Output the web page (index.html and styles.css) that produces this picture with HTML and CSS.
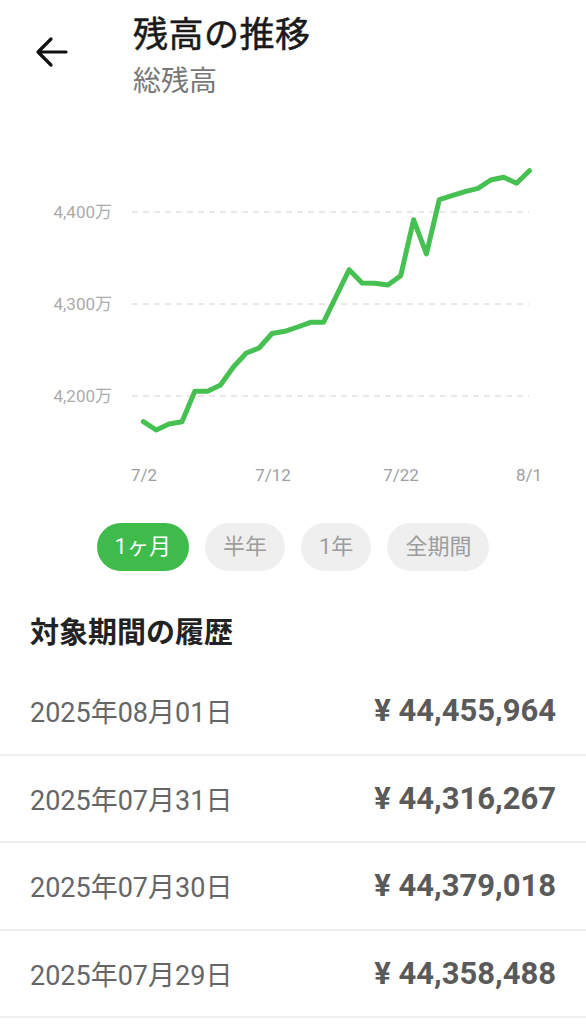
FILE: index.html
```html
<!DOCTYPE html>
<html lang="ja">
<head>
<meta charset="utf-8">
<link rel="stylesheet" href="styles.css">
</head>
<body>
<header class="header">
  <div class="back">
    <svg width="44" height="44" viewBox="0 0 44 44"><path d="M36 22H8M21 9L8 22l13 13" fill="none" stroke="#111" stroke-width="3.2" stroke-linecap="round" stroke-linejoin="round"/></svg>
  </div>
  <div class="titles">
    <div class="title">残高の推移</div>
    <div class="subtitle">総残高</div>
  </div>
</header>

<div class="chart">
  <svg width="586" height="390" viewBox="0 110 586 390">
    <g stroke="#d2d2d2" stroke-width="1" stroke-dasharray="6 5">
      <line x1="132" y1="213" x2="529" y2="213"/>
      <line x1="132" y1="305" x2="529" y2="305"/>
      <line x1="132" y1="397" x2="529" y2="397"/>
    </g>
    <g class="ylab" text-anchor="end">
      <text x="112" y="219">4,400万</text>
      <text x="112" y="311">4,300万</text>
      <text x="112" y="403">4,200万</text>
    </g>
    <g class="xlab" text-anchor="middle">
      <text x="144" y="482">7/2</text>
      <text x="273" y="482">7/12</text>
      <text x="401" y="482">7/22</text>
      <text x="529" y="482">8/1</text>
    </g>
    <polyline fill="none" stroke="#46c050" stroke-width="5" stroke-linejoin="round" stroke-linecap="round"
      points="143.3,422.7 156.2,431 169,425 182,422.7 194.8,392.3 207.7,392.3 220.5,386 233.4,368 246.3,354 259.1,349 272,334.5 284.9,332.3 297.7,328 310.6,323.3 323.5,323.3 336.3,297 349.2,270.7 362,284 375,284.3 387.8,286 400.7,276.7 413.6,220.7 426.4,255 439.3,200.7 452,196.7 465,192.7 478,189.3 490.8,181 503.7,178.3 516.6,184.3 529.4,171.7"/>
  </svg>
</div>

<div class="pills">
  <span class="pill active">1ヶ月</span>
  <span class="pill">半年</span>
  <span class="pill">1年</span>
  <span class="pill">全期間</span>
</div>

<h2 class="section">対象期間の履歴</h2>

<ul class="list">
  <li class="row"><span class="date">2025年08月01日</span><span class="amount">¥ 44,455,964</span></li>
  <li class="row"><span class="date">2025年07月31日</span><span class="amount">¥ 44,316,267</span></li>
  <li class="row"><span class="date">2025年07月30日</span><span class="amount">¥ 44,379,018</span></li>
  <li class="row"><span class="date">2025年07月29日</span><span class="amount">¥ 44,358,488</span></li>
</ul>
</body>
</html>
```

FILE: styles.css
```css
* { box-sizing: border-box; }
html, body { margin: 0; padding: 0; background: #fff; }
body {
  font-family: Roboto, "Noto Sans CJK JP", sans-serif;
  color: #222;
  width: 586px;
  overflow: hidden;
}
.header {
  display: flex;
  padding: 14px 0 0 30px;
}
.back {
  width: 44px;
  height: 44px;
  margin-top: 16px;
  margin-right: 59px;
}
.back svg { display: block; }
.titles { display: flex; flex-direction: column; }
.title {
  font-size: 35px;
  line-height: 44px;
  font-weight: 400;
  color: #1a1a1a;
  letter-spacing: 0.5px;
  -webkit-text-stroke: 0.5px #1a1a1a;
}
.subtitle {
  margin-top: 4px;
  font-size: 28px;
  line-height: 40px;
  color: #777;
}
.chart { margin-top: 7px; }
.chart svg { display: block; }
.ylab text { font-size: 17px; fill: #ababab; font-family: Roboto, "Noto Sans CJK JP", sans-serif; }
.xlab text { font-size: 17px; fill: #a0a0a0; font-family: Roboto, sans-serif; }
.pills {
  display: flex;
  justify-content: center;
  gap: 16px;
  margin-top: 24px;
}
.pill {
  height: 48px;
  line-height: 48px;
  padding: 0 18px;
  border-radius: 24px;
  background: #efefef;
  color: #9d9d9d;
  font-size: 22px;
}
.pill.active { background: #3fbb4b; color: #fff; }
.section {
  margin: 42px 0 0;
  padding-left: 30px;
  font-size: 29px;
  line-height: 40px;
  font-weight: 700;
  color: #222;
}
.list { list-style: none; margin: 15px 0 0; padding: 0; }
.row {
  display: flex;
  justify-content: space-between;
  align-items: center;
  height: 87.5px;
  padding: 0 30px;
  border-bottom: 2px solid #efefef;
}
.date { font-size: 27px; color: #666; }
.amount { font-size: 31px; font-weight: 700; color: #5a5a5a; }
```
